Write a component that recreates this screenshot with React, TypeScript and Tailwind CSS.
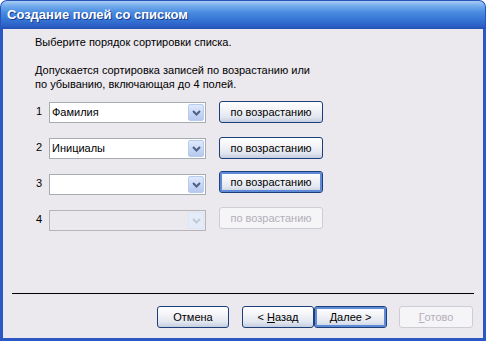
import React from "react";

const font = { fontFamily: '"Liberation Sans", Arial, sans-serif' };

function Chevron({ disabled }: { disabled?: boolean }) {
  return (
    <svg width="9" height="6" viewBox="0 0 9 6">
      <path d="M1 1 L4.5 4.5 L8 1" fill="none" stroke={disabled ? "#c3c8d4" : "#4d6185"} strokeWidth="2" />
    </svg>
  );
}

function Combo({ value, disabled }: { value?: string; disabled?: boolean }) {
  return (
    <div
      className={`flex h-[21px] w-[157px] items-center border ${disabled ? "border-[#b6b4bb] bg-[#ebe8ee]" : "border-[#a5acb2] bg-white"}`}
    >
      <div className="flex-1 pl-[2px] text-[11px] leading-[13px] text-black">{value}</div>
      <div
        className={`mr-[1px] flex h-[17px] w-[16px] items-center justify-center rounded-[2px] border ${disabled ? "border-[#dde6f6] bg-[#e4ecfa]" : "border-[#b8cbee] bg-[linear-gradient(to_bottom,#dfe9fb,#b4c9ee)]"}`}
      >
        <Chevron disabled={disabled} />
      </div>
    </div>
  );
}

function Btn({
  children,
  w,
  focused,
  disabled,
  className = "",
}: {
  children: React.ReactNode;
  w: string;
  focused?: boolean;
  disabled?: boolean;
  className?: string;
}) {
  if (disabled) {
    return (
      <div
        className={`flex h-[22px] items-center justify-center rounded-[3px] border border-[#cfcdd4] bg-[#f5f4f7] text-[11px] text-[#b2afb8] ${w} ${className}`}
      >
        {children}
      </div>
    );
  }
  return (
    <div
      className={`flex h-[22px] items-center justify-center whitespace-pre rounded-[3px] border border-[#1c3f7a] bg-[linear-gradient(to_bottom,#ffffff_0%,#f5f5f8_35%,#e2e6ef_75%,#c4cde0_100%)] text-[11px] text-black ${focused ? "shadow-[inset_0_0_0_2px_#5f8ad8]" : ""} ${w} ${className}`}
    >
      {children}
    </div>
  );
}

export default function App() {
  return (
    <div className="flex h-[341px] w-[486px] flex-col" style={font}>
      <div className="flex h-[29px] items-center rounded-t-[7px] border border-b-0 border-[#2a55bd] bg-[linear-gradient(to_bottom,#a9cdf3_0%,#78b0ee_15%,#4b8ce0_40%,#3777d6_65%,#2c5fc5_90%,#2450b5_100%)] pl-[6px]">
        <span className="text-[13px] font-bold text-white [text-shadow:1px_1px_0_#1b3b8c]">
          Создание полей со списком
        </span>
      </div>
      <div className="flex flex-1 flex-col border-x-[3px] border-b-[3px] border-[#2b58c5] bg-[#ebe8ee]">
        <div className="pl-[32px] pt-[7px] text-[11px] leading-[13px] text-black">
          Выберите порядок сортировки списка.
        </div>
        <div className="mt-[14px] pl-[32px] text-[11px] leading-[14px] text-black">
          Допускается сортировка записей по возрастанию или
          <br />
          по убыванию, включающая до 4 полей.
        </div>
        <div className="mt-[11px] flex flex-col">
          {[
            { n: "1", v: "Фамилия", off: "mt-[-1px]" },
            { n: "2", v: "Инициалы", off: "mt-[-1px]" },
            { n: "3", v: "", off: "mt-[-3px]", focus: true },
            { n: "4", v: "", off: "mt-[-3px]", disabled: true },
          ].map((r, i) => (
            <div key={r.n} className={`flex h-[21px] items-start ${i > 0 ? "mt-[15px]" : ""}`}>
              <div className="w-[46px] pl-[33px] pt-[3px] text-[11px] leading-[13px] text-black">{r.n}</div>
              <Combo value={r.v} disabled={r.disabled} />
              <Btn w="w-[104px]" className={`ml-[13px] ${r.off}`} focused={r.focus} disabled={r.disabled}>
                по возрастанию
              </Btn>
            </div>
          ))}
        </div>
        <div className="flex-1" />
        <div className="mx-[9px] h-[1px] bg-black" />
        <div className="mb-[10px] mt-[12px] flex items-center">
          <Btn w="w-[72px]" className="ml-[154px]">
            Отмена
          </Btn>
          <Btn w="w-[72px]" className="ml-[13px]">
            {"< "}
            <span className="underline">Н</span>азад
          </Btn>
          <Btn w="w-[73px]" focused>
            <span className="underline">Д</span>
            {"алее >"}
          </Btn>
          <Btn w="w-[74px]" className="ml-[12px]" disabled>
            <span className="underline">Г</span>отово
          </Btn>
        </div>
      </div>
    </div>
  );
}
